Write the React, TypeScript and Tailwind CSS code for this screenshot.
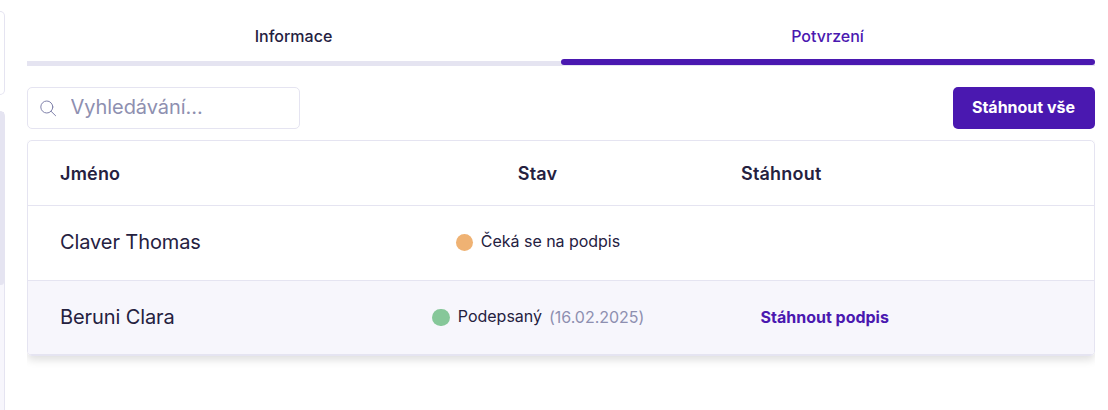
import React from 'react';

const MagnifierIcon = () => (
  <svg width="17" height="17" viewBox="0 0 17 17" fill="none" stroke="#8082ab" strokeWidth="1" strokeLinecap="round">
    <circle cx="6.8" cy="7" r="6" />
    <path d="M11.2 11.4l4.4 4.3" />
  </svg>
);

const Tab: React.FC<{ label: string; active?: boolean }> = ({ label, active }) => (
  <button
    className={`relative h-[66px] flex-1 border-b-[5px] border-[#e5e4f1] pt-[25px] text-center text-base leading-[22px] font-medium ${active ? 'text-[#4a18b0]' : 'text-[#25213f]'}`}
  >
    <span className="-ml-px block h-[36px]">{label}</span>
    {active && <span className="absolute -bottom-1 left-0 h-1.5 w-full rounded-full bg-[#4a18b0]" />}
  </button>
);

const rowGrid = 'grid grid-cols-[332px_356px_378px] items-center';

export default function Confirmations() {
  return (
    <div className="flex h-[410px] w-[1108px] overflow-hidden bg-white font-['Inter',sans-serif] text-[#25213f]">
      <aside className="flex w-[5px] flex-col pt-[11px]">
        <div className="h-[84px] rounded-r-[5px] border border-l-0 border-[#e5e4f1]" />
        <div className="mt-4 flex-1 rounded-tr-[5px] border-t border-r border-[#e5e4f1] bg-[#f7f6fc]">
          <div className="h-[173px] rounded-br-[3px] bg-[#e5e4f1]" />
        </div>
      </aside>

      <main className="ml-[22px] w-[1068px]">
        <div className="flex">
          <Tab label="Informace" />
          <Tab label="Potvrzení" active />
        </div>

        <div className="mt-[21px] flex items-center justify-between">
          <div className="flex h-[42px] w-[273px] items-center rounded-[5px] border border-[#e5e4f1] pl-3">
            <MagnifierIcon />
            <input
              className="ml-[13.5px] w-[200px] pb-0.5 text-xl leading-6 tracking-[-0.06px] outline-none placeholder:text-[#8e8fb0]"
              placeholder="Vyhledávání..."
            />
          </div>
          <button className="h-[42px] w-[142px] rounded-[5px] bg-[#4a18b0] pr-px pb-0.5 text-base font-bold text-white">
            Stáhnout vše
          </button>
        </div>

        <div className="mt-[11px] overflow-hidden pb-5">
          <div className="overflow-hidden rounded-[5px] border border-[#e5e4f1] shadow-[0_4px_8px_rgba(0,0,0,0.13)]">
            <div className={`${rowGrid} h-16 pt-0.5 text-lg font-semibold tracking-[0.2px]`}>
              <span className="pl-8">Jméno</span>
              <span className="pr-px text-center">Stav</span>
              <span className="pl-[25px]">Stáhnout</span>
            </div>
            <div className={`${rowGrid} h-[75px] border-t border-[#e5e4f1]`}>
              <span className="pb-0.5 pl-8 text-xl tracking-[-0.1px]">Claver Thomas</span>
              <span className="flex items-center justify-center pb-0.5 text-base">
                <i className="mt-px mr-2 size-[17px] rounded-full bg-[#efb273]" />
                <span className="pb-[3px] tracking-[-0.03px]">Čeká se na podpis</span>
              </span>
            </div>
            <div className={`${rowGrid} h-[75px] border-y border-[#e5e4f1] bg-[#f7f6fc]`}>
              <span className="pb-0.5 pl-8 text-xl tracking-[-0.1px]">Beruni Clara</span>
              <span className="flex items-center justify-center pb-px text-base">
                <i className="mr-2 h-[17px] w-[18px] rounded-full bg-[#86c799]" />
                <span className="pb-0.5">Podepsaný</span>
                <span className="ml-[7px] tracking-[-0.03px] text-[#8e8fb0]">(16.02.2025)</span>
              </span>
              <a className="pb-0.5 pl-[44.5px] text-base font-bold text-[#4a18b0]">Stáhnout podpis</a>
            </div>
          </div>
        </div>
      </main>
    </div>
  );
}
